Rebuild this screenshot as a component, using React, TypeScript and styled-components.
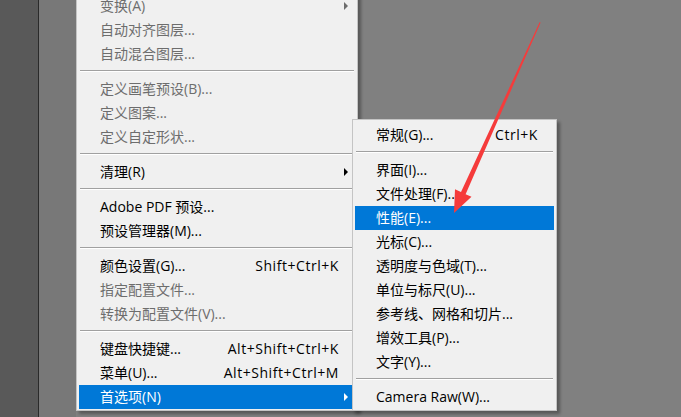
import React from "react";
import styled, { createGlobalStyle } from "styled-components";

const Global = createGlobalStyle`
  html, body { margin: 0; padding: 0; background: #808080; }
  body { font-family: "Open Sans", "Noto Sans CJK SC", sans-serif; }
`;

const Page = styled.div`
  position: relative;
  display: flex;
  width: 681px;
  height: 417px;
  overflow: hidden;
  background: #808080;
`;

const DarkStrip = styled.div`
  width: 38px;
  flex: none;
  background: #595959;
`;

const Rule = styled.div`
  width: 1px;
  flex: none;
  background: #2a2a2a;
`;

const Dock = styled.div`
  width: 37px;
  flex: none;
  background: #787878;
`;

const MenuArea = styled.div`
  position: relative;
  flex: none;
`;

const Menu = styled.div<{ $width: number }>`
  width: ${(p) => p.$width}px;
  box-sizing: border-box;
  background: #f0f0f0;
  border: 1px solid #c4c4c4;
  padding: 3px 2px 1px;
  display: flex;
  flex-direction: column;
  box-shadow: 3px 3px 3px rgba(0, 0, 0, 0.32);
  font-size: 14px;
`;

const MainMenu = styled(Menu)`
  margin-top: -10px;
`;

const SubMenu = styled(Menu)`
  position: absolute;
  left: 276px;
  top: 119px;
`;

const Row = styled.div<{ $active?: boolean; $disabled?: boolean }>`
  display: grid;
  grid-template-columns: 1fr auto 16px;
  align-items: center;
  height: 24px;
  line-height: 24px;
  padding-left: 21px;
  white-space: nowrap;
  background: ${(p) => (p.$active ? "#0078d7" : "transparent")};
  color: ${(p) => (p.$active ? "#ffffff" : p.$disabled ? "#6d6d6d" : "#000000")};
`;

const Label = styled.span``;

const Shortcut = styled.span`
  text-align: right;
  letter-spacing: 0.55px;
`;

const ArrowCell = styled.span`
  display: flex;
  align-items: center;
  padding-left: 5px;
`;

const Tri = styled.span`
  width: 0;
  height: 0;
  border-top: 4px solid transparent;
  border-bottom: 4px solid transparent;
  border-left: 4px solid currentColor;
`;

const Separator = styled.div`
  height: 11px;
  box-sizing: border-box;
  padding-top: 4px;
  margin: 0 1px;
  &::before {
    content: "";
    display: block;
    height: 1px;
    background: #a0a0a0;
    border-bottom: 1px solid #ffffff;
  }
`;

const Overlay = styled.svg`
  position: absolute;
  left: 0;
  top: 0;
  pointer-events: none;
`;

type Item =
  | { sep: true }
  | {
      sep?: false;
      label: string;
      shortcut?: string;
      arrow?: boolean;
      disabled?: boolean;
      active?: boolean;
    };

const mainItems: Item[] = [
  { label: "变换(A)", disabled: true, arrow: true },
  { label: "自动对齐图层...", disabled: true },
  { label: "自动混合图层...", disabled: true },
  { sep: true },
  { label: "定义画笔预设(B)...", disabled: true },
  { label: "定义图案...", disabled: true },
  { label: "定义自定形状...", disabled: true },
  { sep: true },
  { label: "清理(R)", arrow: true },
  { sep: true },
  { label: "Adobe PDF 预设..." },
  { label: "预设管理器(M)..." },
  { sep: true },
  { label: "颜色设置(G)...", shortcut: "Shift+Ctrl+K" },
  { label: "指定配置文件...", disabled: true },
  { label: "转换为配置文件(V)...", disabled: true },
  { sep: true },
  { label: "键盘快捷键...", shortcut: "Alt+Shift+Ctrl+K" },
  { label: "菜单(U)...", shortcut: "Alt+Shift+Ctrl+M" },
  { label: "首选项(N)", arrow: true, active: true },
];

const subItems: Item[] = [
  { label: "常规(G)...", shortcut: "Ctrl+K" },
  { sep: true },
  { label: "界面(I)..." },
  { label: "文件处理(F)..." },
  { label: "性能(E)...", active: true },
  { label: "光标(C)..." },
  { label: "透明度与色域(T)..." },
  { label: "单位与标尺(U)..." },
  { label: "参考线、网格和切片..." },
  { label: "增效工具(P)..." },
  { label: "文字(Y)..." },
  { sep: true },
  { label: "Camera Raw(W)..." },
];

function renderItems(items: Item[]) {
  return items.map((it, i) =>
    it.sep ? (
      <Separator key={i} />
    ) : (
      <Row key={i} $active={it.active} $disabled={it.disabled}>
        <Label>{it.label}</Label>
        <Shortcut>{it.shortcut ?? ""}</Shortcut>
        <ArrowCell>{it.arrow ? <Tri /> : null}</ArrowCell>
      </Row>
    )
  );
}

export default function App() {
  return (
    <>
      <Global />
      <Page>
        <DarkStrip />
        <Rule />
        <Dock />
        <MenuArea>
          <MainMenu $width={282}>{renderItems(mainItems)}</MainMenu>
          <SubMenu $width={205}>{renderItems(subItems)}</SubMenu>
        </MenuArea>
        <Overlay width={681} height={417} viewBox="0 0 681 417">
          <polygon
            points="540.6,22.6 465.6,194.2 471.5,196.8 454,213 455,189.2 461,192 539.6,22.2"
            fill="#f53b3b"
          />
        </Overlay>
      </Page>
    </>
  );
}
